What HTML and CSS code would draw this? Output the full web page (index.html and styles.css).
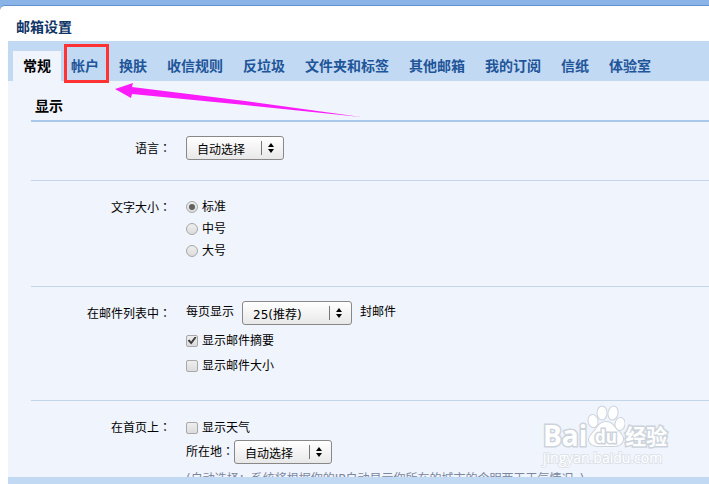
FILE: index.html
```html
<!DOCTYPE html>
<html lang="zh-CN">
<head>
  <meta charset="UTF-8" />
  <meta name="viewport" content="width=device-width, initial-scale=1.0"/>
  <title>邮箱设置</title>
  <link rel="stylesheet" href="styles.css">
</head>
<body>
  <div class="window">
    <h1 class="title">邮箱设置</h1>

    <nav class="tabs">
      <a href="#general" class="tab active">常规</a>
      <a href="#account" class="tab marked">帐户</a>
      <a href="#skin" class="tab">换肤</a>
      <a href="#rules" class="tab">收信规则</a>
      <a href="#spam" class="tab">反垃圾</a>
      <a href="#folders" class="tab">文件夹和标签</a>
      <a href="#pop" class="tab">其他邮箱</a>
      <a href="#rss" class="tab">我的订阅</a>
      <a href="#paper" class="tab">信纸</a>
      <a href="#lab" class="tab">体验室</a>
    </nav>

    <form class="settings" id="general">
      <h2 class="section-title">显示</h2>

      <div class="row">
        <label class="row-label" for="language">语言<span class="colon" lang="zh-TW">：</span></label>
        <div class="row-body">
          <span class="select">
            <select id="language"><option>自动选择</option></select>
            <svg class="arrows" viewBox="0 0 14 14" aria-hidden="true"><path class="bar" d="M.5 0v14"/><path d="M7 6l3-4 3 4zM7 8l3 4 3-4z"/></svg>
          </span>
        </div>
      </div>

      <div class="row" role="radiogroup" aria-labelledby="size-label">
        <span class="row-label" id="size-label">文字大小<span class="colon" lang="zh-TW">：</span></span>
        <div class="row-body">
          <label class="option radio-option"><input type="radio" name="size" checked>标准</label>
          <label class="option radio-option"><input type="radio" name="size">中号</label>
          <label class="option radio-option"><input type="radio" name="size">大号</label>
        </div>
      </div>

      <div class="row">
        <span class="row-label">在邮件列表中<span class="colon" lang="zh-TW">：</span></span>
        <div class="row-body">
          <div class="inline">
            <label for="per-page">每页显示</label>
            <span class="select wide">
              <select id="per-page"><option>25(推荐)</option></select>
              <svg class="arrows" viewBox="0 0 14 14" aria-hidden="true"><path class="bar" d="M.5 0v14"/><path d="M7 6l3-4 3 4zM7 8l3 4 3-4z"/></svg>
            </span>
            <span class="unit">封邮件</span>
          </div>
          <label class="option"><input type="checkbox" checked>显示邮件摘要</label>
          <label class="option"><input type="checkbox">显示邮件大小</label>
        </div>
      </div>

      <div class="row">
        <span class="row-label">在首页上<span class="colon" lang="zh-TW">：</span></span>
        <div class="row-body">
          <label class="option"><input type="checkbox">显示天气</label>
          <div class="inline tight">
            <label for="city">所在地<span class="colon" lang="zh-TW">：</span></label>
            <span class="select">
              <select id="city"><option>自动选择</option></select>
              <svg class="arrows" viewBox="0 0 14 14" aria-hidden="true"><path class="bar" d="M.5 0v14"/><path d="M7 6l3-4 3 4zM7 8l3 4 3-4z"/></svg>
            </span>
          </div>
          <p class="hint">(自动选择：系统将根据你的IP自动显示你所在的城市的今明两天天气情况。)</p>
        </div>
      </div>
    </form>
    <div class="footer"></div>
  </div>

  <svg class="pointer" viewBox="0 0 246 36" aria-hidden="true">
    <path d="M0 7L18 1L17 5L130 19L246 35L130 23L17 12L16 16z"/>
  </svg>

  <div class="watermark">
    <div class="brand">
      <span class="bai">Bai</span>
      <svg class="paw" viewBox="0 0 38 42" aria-hidden="true">
        <ellipse cx="6" cy="16" rx="4.500" ry="6" transform="rotate(-10 6 16)"/>
        <ellipse cx="15" cy="8" rx="4.500" ry="6.500"/>
        <ellipse cx="26" cy="8" rx="4.500" ry="6.500" transform="rotate(10 26 8)"/>
        <ellipse cx="33" cy="19" rx="4.500" ry="6" transform="rotate(10 33 19)"/>
        <path d="M19 17c5 0 7 3 10 7c4 4 8 7 7 11c-1 5-6 6-10 6h-14c-4 0-9-1-10-6c0-4 4-7 7-11c3-4 5-7 10-7z"/>
        <text x="19" y="38" text-anchor="middle">du</text>
      </svg>
      <span class="cn">经验</span>
    </div>
    <div class="site">jingyan.baidu.com</div>
  </div>
</body>
</html>
```

FILE: styles.css
```css
* {
  box-sizing: border-box;
}

body {
  margin: 0;
  padding-top: 5px;
  height: 100vh;
  overflow: hidden;
  background: #8ab4e8;
  color: #000;
  font: 12px/16px "DejaVu Sans", "Noto Sans CJK SC", sans-serif;
}

.window {
  display: flex;
  flex-direction: column;
  height: 100%;
  padding-left: 8px;
  background: #fff;
  border-top: 1px solid #6490cc;
  border-top-left-radius: 5px;
}

.title {
  margin: 0;
  padding: 11px 8px 4px;
  font-size: 14px;
  line-height: 20px;
  color: #0f3566;
}

/* tabs */
.tabs {
  display: flex;
  flex-shrink: 0;
  padding: 10px 5px 0;
  background: #c2d9f3;
}

.tab {
  padding: 0 10px;
  font-size: 14px;
  font-weight: bold;
  line-height: 30px;
  color: #1f5599;
  text-decoration: none;
  white-space: nowrap;
}

.tab.active {
  background: #f0f4fc;
  color: #000;
}

.tab.marked {
  position: relative;
}

.tab.marked::after {
  content: "";
  position: absolute;
  inset: -7px 0 -2px 3px;
  border: 3px solid #ff3333;
}

/* settings */
.settings {
  flex: 1;
  min-height: 0;
  overflow: hidden;
  padding-left: 23px;
  background: #f0f4fc;
}

.section-title {
  margin: 0;
  padding: 15px 4px 4px;
  border-bottom: 2px solid #a8c8ec;
  font-size: 14px;
  line-height: 20px;
}

.row {
  display: grid;
  grid-template-columns: 140px 1fr;
  column-gap: 15px;
  padding: 14px 0 20px;
}

.row + .row {
  padding: 14px 0 22px;
  border-top: 1px solid #c5d5e8;
}

.row-label {
  padding-top: 4px;
  text-align: right;
}

.colon {
  font-family: "Noto Sans CJK TC", sans-serif;
}

.option {
  display: flex;
  align-items: center;
  gap: 4px;
  height: 25px;
}

.radio-option {
  height: 22px;
}

.radio-option:first-child {
  margin-top: 1px;
}

.radio-option:last-child {
  margin-bottom: 2px;
}

.option input {
  appearance: none;
  display: grid;
  place-items: center;
  width: 12px;
  height: 12px;
  margin: 0;
  border: 1px solid #a8a8a8;
  border-radius: 2px;
  background: linear-gradient(#eee, #dcdcdc);
}

.option input[type="radio"] {
  border-radius: 50%;
}

.option input[type="radio"]:checked::before {
  content: "";
  width: 6px;
  height: 6px;
  border-radius: 50%;
  background: #606060;
}

.option input[type="checkbox"]:checked::before {
  content: "";
  width: 9px;
  height: 8px;
  background: #404040;
  clip-path: polygon(0 50%, 22% 38%, 40% 62%, 82% 0, 100% 14%, 42% 100%);
}

.inline {
  display: flex;
  gap: 8px;
  padding-bottom: 3px;
}

.inline > label,
.unit {
  padding-top: 3px;
}

.inline.tight {
  gap: 0;
}

.select {
  display: grid;
  grid-template-columns: 98px;
  align-items: center;
}

.select.wide {
  grid-template-columns: 110px;
}

.select select {
  appearance: none;
  grid-area: 1 / 1;
  height: 24px;
  margin: 0;
  padding: 3px 24px 0 10px;
  border: 1px solid #888;
  border-radius: 3px;
  background: linear-gradient(#fff, #e8e8e8);
  color: #000;
  font: inherit;
}

.arrows {
  grid-area: 1 / 1;
  justify-self: end;
  width: 14px;
  height: 14px;
  margin-right: 9px;
  pointer-events: none;
}

.arrows .bar {
  stroke: #777;
}

.hint {
  margin: 4px 0 0;
  color: #7b87a0;
  white-space: nowrap;
}

.footer {
  flex-shrink: 0;
  height: 7px;
  background: #c2d9f3;
}

/* arrow pointing at the account tab */
.pointer {
  position: absolute;
  left: 115px;
  top: 82px;
  width: 246px;
  height: 36px;
  fill: #fa1cfa;
}

/* watermark */
.watermark {
  position: absolute;
  right: 36px;
  bottom: 17px;
  width: 130px;
  color: #fff;
  font-family: "Open Sans", sans-serif;
  -webkit-text-stroke: 3px #ccd3dc;
  paint-order: stroke fill;
}

.brand {
  display: flex;
  align-items: flex-end;
  font-size: 28px;
  font-weight: bold;
  line-height: 28px;
}

.paw {
  flex-shrink: 0;
  width: 38px;
  height: 42px;
  margin-bottom: 2px;
  fill: #fff;
  stroke: #ccd3dc;
  stroke-width: 2px;
}

.paw text {
  font-size: 17px;
  font-weight: bold;
  stroke-width: 3px;
}

.brand .cn {
  font-family: "Noto Sans CJK SC", sans-serif;
  font-size: 21px;
}

.site {
  font-size: 14px;
  line-height: 18px;
  -webkit-text-stroke-width: 2px;
  -webkit-text-stroke-color: #dde3eb;
}
```
